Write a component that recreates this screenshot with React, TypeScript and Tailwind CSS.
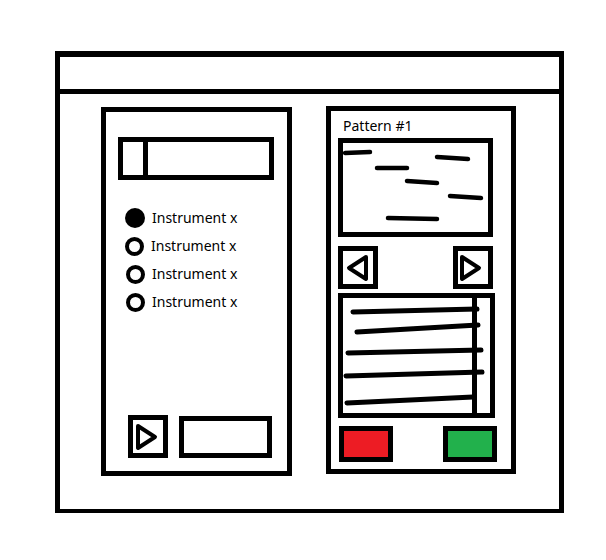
import type { ReactNode } from "react";

const FONT = { fontFamily: '"Noto Sans", "Open Sans", sans-serif' };

// thick marker-style strokes inside the pattern preview
const NOTES: [number, number, number, number][] = [
  [2, 10, 27, 9],
  [94, 14, 125, 16],
  [34, 25, 64, 25],
  [64, 38, 94, 40],
  [107, 53, 138, 55],
  [45, 75, 94, 76],
];

const LIST_LINES: [number, number, number, number][] = [
  [10, 14, 134, 11],
  [14, 34, 135, 27],
  [5, 55, 138, 52],
  [3, 78, 139, 74],
  [4, 105, 130, 99],
];

function Triangle({ dir }: { dir: "left" | "right" }) {
  const pts = dir === "right" ? "3,3 20,14 3,25" : "21,3 4,14 21,25";
  return (
    <svg width="24" height="28" viewBox="0 0 24 28" className="block">
      <polygon points={pts} fill="none" stroke="black" strokeWidth="4" strokeLinejoin="round" />
    </svg>
  );
}

function Box({ className, children }: { className: string; children?: ReactNode }) {
  return <div className={`border-[5px] border-black ${className}`}>{children}</div>;
}

function Radio({ checked, label, shift }: { checked?: boolean; label: string; shift?: boolean }) {
  return (
    <div className="flex h-[28px] items-center">
      {checked ? (
        <span className="h-[20px] w-[20px] shrink-0 rounded-full bg-black" />
      ) : (
        <span
          className={`h-[19px] w-[19px] shrink-0 rounded-full border-[4px] border-black ${shift ? "ml-[1px]" : ""}`}
        />
      )}
      <span className={`text-[14px] leading-[20px] text-black ${checked || !shift ? "ml-[7px]" : "ml-[7px]"}`}>
        {label}
      </span>
    </div>
  );
}

export default function App() {
  return (
    <div className="h-[560px] w-[606px] bg-white pl-[55px] pt-[51px]" style={FONT}>
      <div className="flex h-[462px] w-[509px] flex-col border-x-[5px] border-b-[4px] border-t-[6px] border-black">
        <header className="h-[37px] border-b-[5px] border-black" />

        <div className="flex items-start gap-[34px] pl-[41px]">
          {/* instrument panel */}
          <Box className="mt-[13px] flex h-[369px] w-[191px] flex-col">
            <Box className="ml-[12px] mt-[25px] flex h-[43px] w-[156px]">
              <div className="h-full w-[25px] border-r-[5px] border-black" />
            </Box>

            <div className="ml-[19px] mt-[24px] flex flex-col">
              <Radio checked label="Instrument x" />
              <Radio label="Instrument x" />
              <Radio label="Instrument x" shift />
              <Radio label="Instrument x" shift />
            </div>

            <div className="mb-[13px] ml-[22px] mt-auto flex items-start gap-[11px]">
              <Box className="flex h-[43px] w-[40px] items-center pl-[2px]">
                <Triangle dir="right" />
              </Box>
              <Box className="mt-[1px] h-[42px] w-[93px]" />
            </div>
          </Box>

          {/* pattern panel */}
          <Box className="mt-[12px] flex h-[368px] w-[190px] flex-col">
            <p className="ml-[12px] mt-[5px] text-[14px] leading-[20px] text-black">Pattern #1</p>

            <Box className="ml-[7px] mt-[2px] h-[99px] w-[155px]">
              <svg width="145" height="89" className="block overflow-visible">
                {NOTES.map(([x1, y1, x2, y2], i) => (
                  <line key={i} x1={x1} y1={y1} x2={x2} y2={y2} stroke="black" strokeWidth="4.5" strokeLinecap="round" />
                ))}
              </svg>
            </Box>

            <div className="ml-[7px] mt-[9px] flex w-[155px] justify-between">
              <Box className="flex h-[43px] w-[40px] items-center justify-center pr-[2px]">
                <Triangle dir="left" />
              </Box>
              <Box className="flex h-[43px] w-[40px] items-center pl-[1px]">
                <Triangle dir="right" />
              </Box>
            </div>

            <Box className="ml-[7px] mt-[4px] flex h-[125px] w-[157px]">
              <svg width="129" height="115" className="block shrink-0 overflow-visible">
                {LIST_LINES.map(([x1, y1, x2, y2], i) => (
                  <line key={i} x1={x1} y1={y1} x2={x2} y2={y2} stroke="black" strokeWidth="5" strokeLinecap="round" />
                ))}
              </svg>
              <div className="h-full w-[18px] border-l-[5px] border-black" />
            </Box>

            <div className="ml-[8px] mt-[8px] flex gap-[50px]">
              <Box className="h-[36px] w-[54px] bg-[#ed1c24]" />
              <Box className="h-[36px] w-[54px] bg-[#22b14c]" />
            </div>
          </Box>
        </div>
      </div>
    </div>
  );
}
